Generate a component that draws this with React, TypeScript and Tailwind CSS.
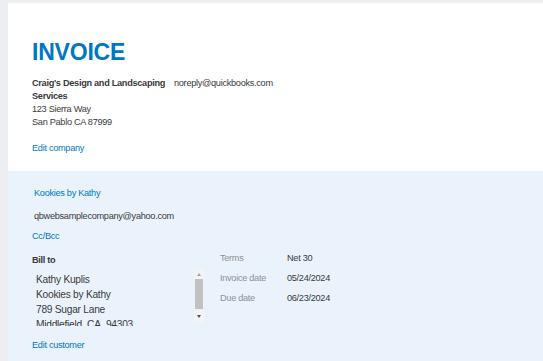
import React from "react";

export default function App() {
  return (
    <div className="w-[543px] h-[361px] overflow-hidden bg-[#eceef1] pl-[8px] pt-[3px] font-['Liberation_Sans',Arial,sans-serif]">
      <div className="flex h-[358px] flex-col bg-white">
        <div className="h-[168px] shrink-0 pl-[24px] pt-[36px]">
          <div className="text-[23px] font-bold leading-[26px] tracking-[-0.2px] text-[#0077c5]">INVOICE</div>
          <div className="mt-[12px] flex text-[9.2px] leading-[13px] tracking-[-0.3px] text-[#393a3d]">
            <div className="w-[142px]">
              <div className="font-bold">Craig's Design and Landscaping Services</div>
              <div>123 Sierra Way</div>
              <div>San Pablo CA 87999</div>
            </div>
            <div>noreply@quickbooks.com</div>
          </div>
          <div className="mt-[13px] text-[9.2px] leading-[13px] tracking-[-0.3px] text-[#0077c5]">Edit company</div>
        </div>
        <div className="flex-1 bg-[#eaf3fb] pl-[24px] pt-[16px] text-[9.2px] leading-[13px] tracking-[-0.3px]">
          <div className="pl-[2px] text-[#0077c5]">Kookies by Kathy</div>
          <div className="mt-[10px] pl-[2px] text-[#393a3d]">qbwebsamplecompany@yahoo.com</div>
          <div className="mt-[7px] text-[#0077c5]">Cc/Bcc</div>
          <div className="mt-[5px] flex items-start">
            <div className="w-[173px]">
              <div className="mt-[6px] font-bold text-[#393a3d]">Bill to</div>
              <div className="mt-[2px] flex h-[57px] overflow-hidden">
                <div className="flex-1 overflow-hidden pl-[4px] pt-[3.4px] text-[10.2px] leading-[15px] tracking-[-0.25px] text-[#393a3d]">
                  <div>Kathy Kuplis</div>
                  <div>Kookies by Kathy</div>
                  <div>789 Sugar Lane</div>
                  <div>Middlefield, CA&nbsp;&nbsp;94303</div>
                </div>
                <div className="mr-[1px] flex h-[54px] w-[10px] flex-col items-center bg-[#f1f3f5]">
                  <div className="flex h-[10px] items-center justify-center">
                    <div className="h-0 w-0 border-x-[2.5px] border-b-[3px] border-x-transparent border-b-[#a3a3a3]" />
                  </div>
                  <div className="h-[30px] w-[8px] bg-[#c1c1c1]" />
                  <div className="flex flex-1 items-center justify-center">
                    <div className="h-0 w-0 border-x-[2.5px] border-t-[3px] border-x-transparent border-t-[#505050]" />
                  </div>
                </div>
              </div>
            </div>
            <div className="ml-[15px] grid grid-cols-[67px_auto] leading-[20px]">
              <div className="text-[#8d9096]">Terms</div>
              <div className="text-[#393a3d]">Net 30</div>
              <div className="text-[#8d9096]">Invoice date</div>
              <div className="text-[#393a3d]">05/24/2024</div>
              <div className="text-[#8d9096]">Due date</div>
              <div className="text-[#393a3d]">06/23/2024</div>
            </div>
          </div>
          <div className="mt-[13px] text-[#0077c5]">Edit customer</div>
        </div>
      </div>
    </div>
  );
}
